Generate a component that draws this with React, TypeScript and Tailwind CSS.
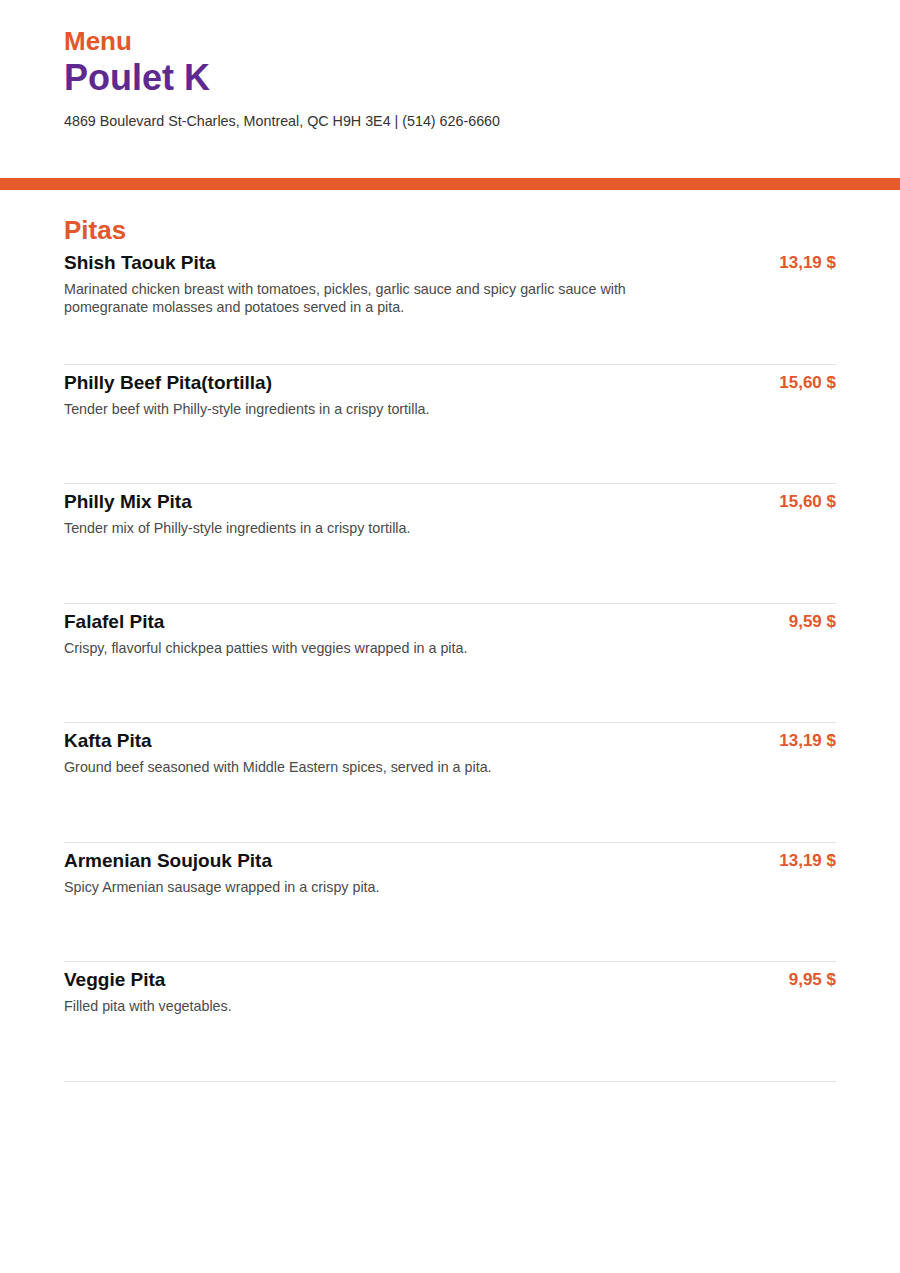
import React from "react";

type Item = { name: string; desc: string; price: string };

const items: Item[] = [
  {
    name: "Shish Taouk Pita",
    desc: "Marinated chicken breast with tomatoes, pickles, garlic sauce and spicy garlic sauce with pomegranate molasses and potatoes served in a pita.",
    price: "13,19 $",
  },
  {
    name: "Philly Beef Pita(tortilla)",
    desc: "Tender beef with Philly-style ingredients in a crispy tortilla.",
    price: "15,60 $",
  },
  {
    name: "Philly Mix Pita",
    desc: "Tender mix of Philly-style ingredients in a crispy tortilla.",
    price: "15,60 $",
  },
  {
    name: "Falafel Pita",
    desc: "Crispy, flavorful chickpea patties with veggies wrapped in a pita.",
    price: "9,59 $",
  },
  {
    name: "Kafta Pita",
    desc: "Ground beef seasoned with Middle Eastern spices, served in a pita.",
    price: "13,19 $",
  },
  {
    name: "Armenian Soujouk Pita",
    desc: "Spicy Armenian sausage wrapped in a crispy pita.",
    price: "13,19 $",
  },
  {
    name: "Veggie Pita",
    desc: "Filled pita with vegetables.",
    price: "9,95 $",
  },
];

function MenuItem({ item }: { item: Item }) {
  return (
    <div className="h-[119.5px] border-b border-[#e2e2e2] pt-[7px]">
      <div className="flex items-start justify-between">
        <div className="max-w-[600px]">
          <h3 className="text-[19px] leading-[22px] font-bold text-[#111]">{item.name}</h3>
          <p className="mt-[6px] text-[14.3px] leading-[18px] text-[#4a4a4a]">{item.desc}</p>
        </div>
        <span className="text-[17px] leading-[22px] font-bold text-[#e2572b]">{item.price}</span>
      </div>
    </div>
  );
}

export default function App() {
  return (
    <div className="min-h-[1273px] bg-white font-['Liberation_Sans',Arial,sans-serif]">
      <header className="px-16 pt-[26px] pb-[48px]">
        <div className="text-[26px] leading-[30px] font-bold text-[#e2572b]">Menu</div>
        <h1 className="mt-[2px] text-[36px] leading-[40px] font-bold text-[#5f2a90]">Poulet K</h1>
        <p className="mt-[14px] text-[14.3px] leading-[18px] text-[#333]">
          4869 Boulevard St-Charles, Montreal, QC H9H 3E4 | (514) 626-6660
        </p>
      </header>
      <div className="h-[12px] bg-[#e55a28]" />
      <section className="px-16 pt-[25px]">
        <h2 className="text-[26px] leading-[30px] font-bold text-[#e2572b]">Pitas</h2>
        <div>
          {items.map((item) => (
            <MenuItem key={item.name} item={item} />
          ))}
        </div>
      </section>
    </div>
  );
}
